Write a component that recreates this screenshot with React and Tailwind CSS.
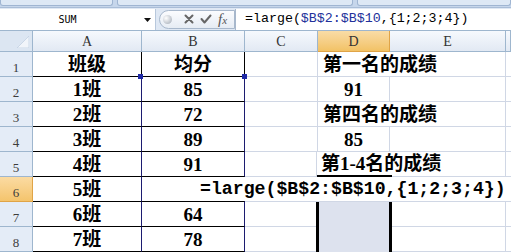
import React from 'react';

const cellFont = "font-['Liberation_Serif','Noto_Sans_CJK_SC',serif] font-bold text-[19px] leading-[19px] text-black";

const rows = [
  { n: 1, a: '班级', b: '均分', d: '第一名的成绩', spill: true },
  { n: 2, a: '1班', b: '85', d: '91', handles: true },
  { n: 3, a: '2班', b: '72', d: '第四名的成绩', spill: true },
  { n: 4, a: '3班', b: '89', d: '85' },
  { n: 5, a: '4班', b: '91', d: '第1-4名的成绩', spill: true, selTop: true },
  { n: 6, a: '5班', b: '', edit: true },
  { n: 7, a: '6班', b: '64', sel: true },
  { n: 8, a: '7班', b: '78', sel: true },
];

function RowHead({ n, active }) {
  return (
    <div
      className={`w-[33px] shrink-0 flex items-end justify-center pb-[2px] border-r border-b font-['Liberation_Serif',serif] text-[13px] leading-none text-[#3c3c3c] ${
        active ? 'bg-linear-to-b from-[#fbdba2] to-[#f4c46c] border-[#e0a447]' : 'bg-[#e4ecf7] border-[#9eb6ce]'
      }`}
    >
      {n}
    </div>
  );
}

function ColHead({ w, label, active }) {
  return (
    <div
      className={`${w} shrink-0 flex items-center justify-center border-r border-b font-['Liberation_Serif',serif] text-[14px] text-[#333] ${
        active ? 'bg-linear-to-b from-[#f9dca6] to-[#f2c265] border-[#e0a447]' : 'bg-linear-to-b from-[#f6f9fd] to-[#e2e9f3] border-[#9eb6ce]'
      }`}
    >
      {label}
    </div>
  );
}

function SheetRow({ r }) {
  const navy = r.n >= 2;
  let cCls = 'w-[73px] border-r border-b border-[#d0d7e5]';
  let dCls = 'w-[72px] border-r border-b border-[#d0d7e5] pl-[26px]';
  let eCls = 'w-[116px] border-r border-b border-[#d0d7e5]';
  if (r.spill) dCls = 'w-[72px] border-b border-[#d0d7e5] pl-[5px]';
  if (r.selTop) {
    cCls = 'w-[72px] border-r border-b border-[#d0d7e5]';
    dCls = 'w-[75px] border-b-2 border-black pl-[4px]';
    eCls = 'w-[114px] border-r border-b border-[#d0d7e5]';
  }
  if (r.sel) {
    cCls = 'w-[71px] border-b border-[#d0d7e5]';
    dCls = 'w-[76px] border-x-[3px] border-black bg-[#dde2ee]';
    eCls = 'w-[114px] border-r border-b border-[#d0d7e5]';
  }

  return (
    <div className="relative flex h-[25px]">
      <RowHead n={r.n} active={r.n === 6} />
      <div
        className={`w-[109px] shrink-0 flex items-end justify-center pb-[2px] border-b border-b-black border-r ${
          navy ? 'border-r-[#1c1c70]' : 'border-r-black'
        } ${cellFont}`}
      >
        {r.a}
      </div>
      <div
        className={`relative w-[103px] shrink-0 flex items-end justify-center pb-[2px] border-b border-b-black border-r ${
          navy ? 'border-r-[#1c1c70]' : 'border-r-black'
        } ${cellFont}`}
      >
        {r.b}
        {r.handles && (
          <>
            <span className="absolute -top-[3px] -left-[4px] w-[5px] h-[5px] bg-[#1f2aa6]" />
            <span className="absolute -top-[3px] -right-[3px] w-[5px] h-[5px] bg-[#1f2aa6]" />
          </>
        )}
      </div>
      <div className={`${cCls} shrink-0`} />
      <div className={`${dCls} shrink-0 flex items-end pb-[2px] whitespace-nowrap ${cellFont}`}>{r.d}</div>
      <div className={`${eCls} shrink-0`} />
      <div className="w-[5px] shrink-0 border-b border-[#d0d7e5]" />
      {r.edit && (
        <div className="absolute left-[143px] top-0 h-[24px] w-[363px] bg-white flex items-center pl-[57px] whitespace-nowrap font-['Liberation_Mono',monospace] font-bold text-[18.2px] leading-none text-black">
          =large($B$2:$B$10,{'{'}1;2;3;4{'}'})
        </div>
      )}
    </div>
  );
}

export default function App() {
  return (
    <div className="w-[511px] h-[252px] overflow-hidden bg-white select-none">
      {/* ribbon bottom edge */}
      <div className="h-[8px] flex gap-[4px] bg-[#c6d6eb] border-b border-[#a9bdd7]">
        <div className="w-[113px] h-[6px] rounded-b-[3px] bg-[#dde8f5] border border-t-0 border-[#9fb5d2]" />
        <div className="w-[236px] h-[6px] rounded-b-[3px] bg-[#dde8f5] border border-t-0 border-[#9fb5d2]" />
        <div className="flex-1 h-[6px] rounded-b-[3px] bg-[#dde8f5] border border-t-0 border-[#9fb5d2]" />
      </div>

      {/* formula bar */}
      <div className="h-[23px] flex items-center bg-[#dfe8f4] border-b border-[#9eb6ce]">
        <div className="relative w-[156px] h-[21px] bg-white border-r border-[#b8c8dc] flex items-center justify-center">
          <span className="font-['DejaVu_Sans_Mono',monospace] text-[10px] text-black -ml-[20px]">SUM</span>
          <svg className="absolute right-[4px] top-[9px]" width="7" height="4" viewBox="0 0 7 4">
            <path d="M0 0h7L3.5 4z" fill="#111" />
          </svg>
        </div>
        <div className="ml-[3px] w-[76px] h-[19px] rounded-l-full border border-[#a8b8cc] bg-linear-to-b from-[#fbfcfe] to-[#e6ecf4] flex items-center">
          <span className="ml-[3px] w-[9px] h-[9px] rounded-full bg-radial-[at_35%_35%] from-white to-[#9ea7b3]" />
          <svg className="ml-[12px]" width="10" height="10" viewBox="0 0 10 10">
            <path d="M1.5 1.5L8.5 8.5M8.5 1.5L1.5 8.5" stroke="#666" strokeWidth="2" strokeLinecap="round" />
          </svg>
          <svg className="ml-[6px]" width="12" height="10" viewBox="0 0 12 10">
            <path d="M1.5 5L4.5 8.5L10.5 1.5" stroke="#666" strokeWidth="2" fill="none" strokeLinecap="round" strokeLinejoin="round" />
          </svg>
          <span className="ml-[6px] font-['Liberation_Serif',serif] italic text-[15px] leading-none text-[#555]">
            f<span className="text-[11px]">x</span>
          </span>
        </div>
        <div className="flex-1 h-[21px] bg-white border-l border-[#a8b8cc] flex items-center pl-[9px] whitespace-nowrap font-['Liberation_Mono',monospace] text-[13.3px] text-black">
          =large(<span className="text-[#22309a]">$B$2:$B$10</span>,{'{'}1;2;3;4{'}'})
        </div>
      </div>

      {/* column headers */}
      <div className="flex h-[21px]">
        <div className="relative w-[33px] shrink-0 bg-[#dce6f2] border-r border-b border-[#9eb6ce]">
          <svg className="absolute right-[3px] bottom-[3px]" width="12" height="12" viewBox="0 0 12 12">
            <path d="M12 0V12H0z" fill="#f1f5fa" stroke="#c3d1e3" strokeWidth="0.8" />
          </svg>
        </div>
        <ColHead w="w-[109px]" label="A" />
        <ColHead w="w-[103px]" label="B" />
        <ColHead w="w-[73px]" label="C" />
        <ColHead w="w-[72px]" label="D" active />
        <ColHead w="w-[116px]" label="E" />
        <ColHead w="w-[5px]" label="" />
      </div>

      {rows.map((r) => (
        <SheetRow key={r.n} r={r} />
      ))}
    </div>
  );
}
